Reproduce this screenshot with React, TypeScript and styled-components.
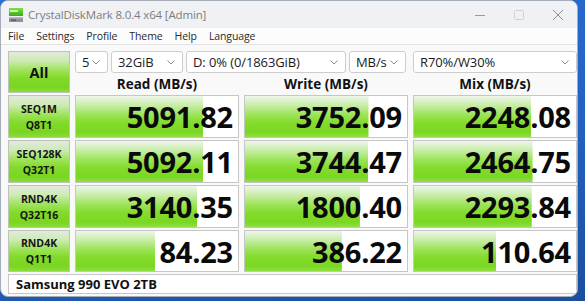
import React from 'react';
import styled, { createGlobalStyle } from 'styled-components';

const Global = createGlobalStyle`
  html, body { margin: 0; padding: 0; }
  body {
    width: 585px; height: 301px; overflow: hidden;
    background: linear-gradient(170deg, #2a70d4 0%, #2262c4 55%, #1b4f9e 100%);
    font-family: "Open Sans", "Noto Sans", sans-serif;
  }
`;

const Window = styled.div`
  width: 578px; height: 297px; box-sizing: border-box;
  border: 1px solid #a4adb8; border-radius: 8px; overflow: hidden;
  background: #f9f9f9;
  display: flex; flex-direction: column;
`;

const TitleBar = styled.div`
  height: 27px; flex: none;
  background: #f0f1f4;
  display: flex; align-items: center;
  padding-left: 7px;
`;

const TitleText = styled.span`
  margin-left: 4px;
  font-size: 11.5px; color: #7d7d7d;
  letter-spacing: -0.15px;
`;

const Controls = styled.div`
  margin-left: auto; display: flex; height: 100%;
`;

const CtrlBtn = styled.div`
  width: 39px; height: 100%;
  display: flex; align-items: center; justify-content: center;
`;

const MenuBar = styled.div`
  height: 16px; flex: none;
  background: #fcfcfc;
  border-bottom: 1px solid #e2e2e2;
  display: flex; align-items: center; gap: 12px;
  padding-left: 7px;
`;

const MenuItem = styled.span`
  font-size: 10.5px; color: #2a2a2a; letter-spacing: -0.1px;
`;

const Content = styled.div`
  padding: 6px 0 0 7px;
`;

const Board = styled.div`
  display: grid;
  grid-template-columns: 62px 164px 164px 164px;
  grid-template-rows: 22px 18px 43px 43px 43px 42px 20px;
  column-gap: 5px; row-gap: 2px;
`;

const green = `linear-gradient(to bottom, #e3e9de 0%, #cdebb4 22%, #9fe35c 45%, #82da2a 65%, #7ad520 88%, #8bdc3c 100%)`;
const barGreen = `linear-gradient(to bottom, #eef6ea 0%, #cdeeb0 20%, #9de45a 45%, #84dc2c 65%, #7bd723 88%, #90de44 100%)`;

const AllButton = styled.div`
  grid-row: 1 / 3; grid-column: 1;
  box-sizing: border-box; border: 1px solid #bcc4b6;
  background: ${green};
  display: flex; align-items: center; justify-content: center;
  font-weight: 700; font-size: 14.5px; color: #111;
`;

const ComboRow = styled.div`
  grid-row: 1; grid-column: 2 / 4;
  display: flex; gap: 3px;
`;

const Combo = styled.div<{ $w?: number }>`
  box-sizing: border-box;
  ${p => (p.$w ? `width: ${p.$w}px; flex: none;` : 'flex: 1;')}
  height: 22px;
  background: #fff; border: 1px solid #cdcdcd; border-radius: 3px;
  display: flex; align-items: center;
  padding: 0 7px 0 6px;
  font-size: 13px; color: #1a1a1a; letter-spacing: -0.1px;
`;

const ComboText = styled.span`
  flex: 1; white-space: nowrap; overflow: hidden;
`;

const Header = styled.div<{ $col: number }>`
  grid-row: 2; grid-column: ${p => p.$col};
  display: flex; align-items: center; justify-content: center;
  font-weight: 700; font-size: 13.5px; color: #111;
`;

const Label = styled.div`
  box-sizing: border-box; border: 1px solid #bcc4b6;
  background: ${green};
  display: flex; flex-direction: column; align-items: center; justify-content: center;
  font-weight: 700; font-size: 10.5px; line-height: 16px; color: #151515;
`;

const Value = styled.div`
  box-sizing: border-box; border: 1px solid #c6c6c6;
  background-color: #fff;
  background-image: ${barGreen};
  background-repeat: no-repeat;
  display: flex; align-items: center; justify-content: flex-end;
  padding-right: 5px;
  font-weight: 700; font-size: 29px; color: #0a0a0a; letter-spacing: -0.2px;
`;

const Footer = styled.div`
  grid-column: 1 / 5;
  box-sizing: border-box; border: 1px solid #c6c6c6; background: #fff;
  display: flex; align-items: center; padding-left: 7px;
  font-weight: 700; font-size: 13px; color: #111;
`;

const Chevron = () => (
  <svg width="8" height="5" viewBox="0 0 8 5">
    <path d="M0.5 0.5 L4 4 L7.5 0.5" fill="none" stroke="#8a8a8a" strokeWidth="1" />
  </svg>
);

const AppIcon = () => (
  <svg width="16" height="16" viewBox="0 0 16 16">
    <defs>
      <linearGradient id="gi" x1="0" y1="0" x2="0" y2="1">
        <stop offset="0" stopColor="#7fe040" />
        <stop offset="1" stopColor="#3ca81c" />
      </linearGradient>
    </defs>
    <rect x="1" y="1" width="14" height="8" fill="url(#gi)" />
    <rect x="2" y="3" width="8" height="2" fill="#c9f5a8" />
    <rect x="1" y="10" width="14" height="5" fill="#8c9299" />
    <rect x="1" y="10" width="14" height="1.5" fill="#b7bcc2" />
    <rect x="3" y="12.5" width="5" height="1.2" fill="#4c5258" />
  </svg>
);

type Row = { l1: string; l2: string; vals: number[] };
const rows: Row[] = [
  { l1: 'SEQ1M', l2: 'Q8T1', vals: [5091.82, 3752.09, 2248.08] },
  { l1: 'SEQ128K', l2: 'Q32T1', vals: [5092.11, 3744.47, 2464.75] },
  { l1: 'RND4K', l2: 'Q32T16', vals: [3140.35, 1800.4, 2293.84] },
  { l1: 'RND4K', l2: 'Q1T1', vals: [84.23, 386.22, 110.64] },
];

const pct = (v: number) => Math.max(0, Math.min(100, ((Math.log10(v) + 1) / 6) * 100));

export default function App() {
  return (
    <>
      <Global />
      <Window>
        <TitleBar>
          <AppIcon />
          <TitleText>CrystalDiskMark 8.0.4 x64 [Admin]</TitleText>
          <Controls>
            <CtrlBtn>
              <svg width="12" height="12" viewBox="0 0 12 12">
                <path d="M1 6.5 H11" stroke="#9a9a9a" strokeWidth="1" />
              </svg>
            </CtrlBtn>
            <CtrlBtn>
              <svg width="12" height="12" viewBox="0 0 12 12">
                <rect x="1.5" y="1.5" width="9" height="9" rx="1" fill="none" stroke="#d2d2d2" strokeWidth="1" />
              </svg>
            </CtrlBtn>
            <CtrlBtn>
              <svg width="12" height="12" viewBox="0 0 12 12">
                <path d="M1 1 L11 11 M11 1 L1 11" stroke="#8e8e8e" strokeWidth="1" />
              </svg>
            </CtrlBtn>
          </Controls>
        </TitleBar>
        <MenuBar>
          {['File', 'Settings', 'Profile', 'Theme', 'Help', 'Language'].map(m => (
            <MenuItem key={m}>{m}</MenuItem>
          ))}
        </MenuBar>
        <Content>
          <Board>
            <AllButton>All</AllButton>
            <ComboRow>
              <Combo $w={33}><ComboText>5</ComboText><Chevron /></Combo>
              <Combo $w={72}><ComboText>32GiB</ComboText><Chevron /></Combo>
              <Combo $w={160}><ComboText>D: 0% (0/1863GiB)</ComboText><Chevron /></Combo>
              <Combo $w={57}><ComboText>MB/s</ComboText><Chevron /></Combo>
            </ComboRow>
            <Combo style={{ gridRow: 1, gridColumn: 4 }}><ComboText>R70%/W30%</ComboText><Chevron /></Combo>
            <Header $col={2}>Read (MB/s)</Header>
            <Header $col={3}>Write (MB/s)</Header>
            <Header $col={4}>Mix (MB/s)</Header>
            {rows.map((r, i) => (
              <React.Fragment key={i}>
                <Label><span>{r.l1}</span><span>{r.l2}</span></Label>
                {r.vals.map((v, j) => (
                  <Value key={j} style={{ backgroundSize: `${pct(v)}% 100%` }}>
                    {v.toFixed(2)}
                  </Value>
                ))}
              </React.Fragment>
            ))}
            <Footer>Samsung 990 EVO 2TB</Footer>
          </Board>
        </Content>
      </Window>
    </>
  );
}
